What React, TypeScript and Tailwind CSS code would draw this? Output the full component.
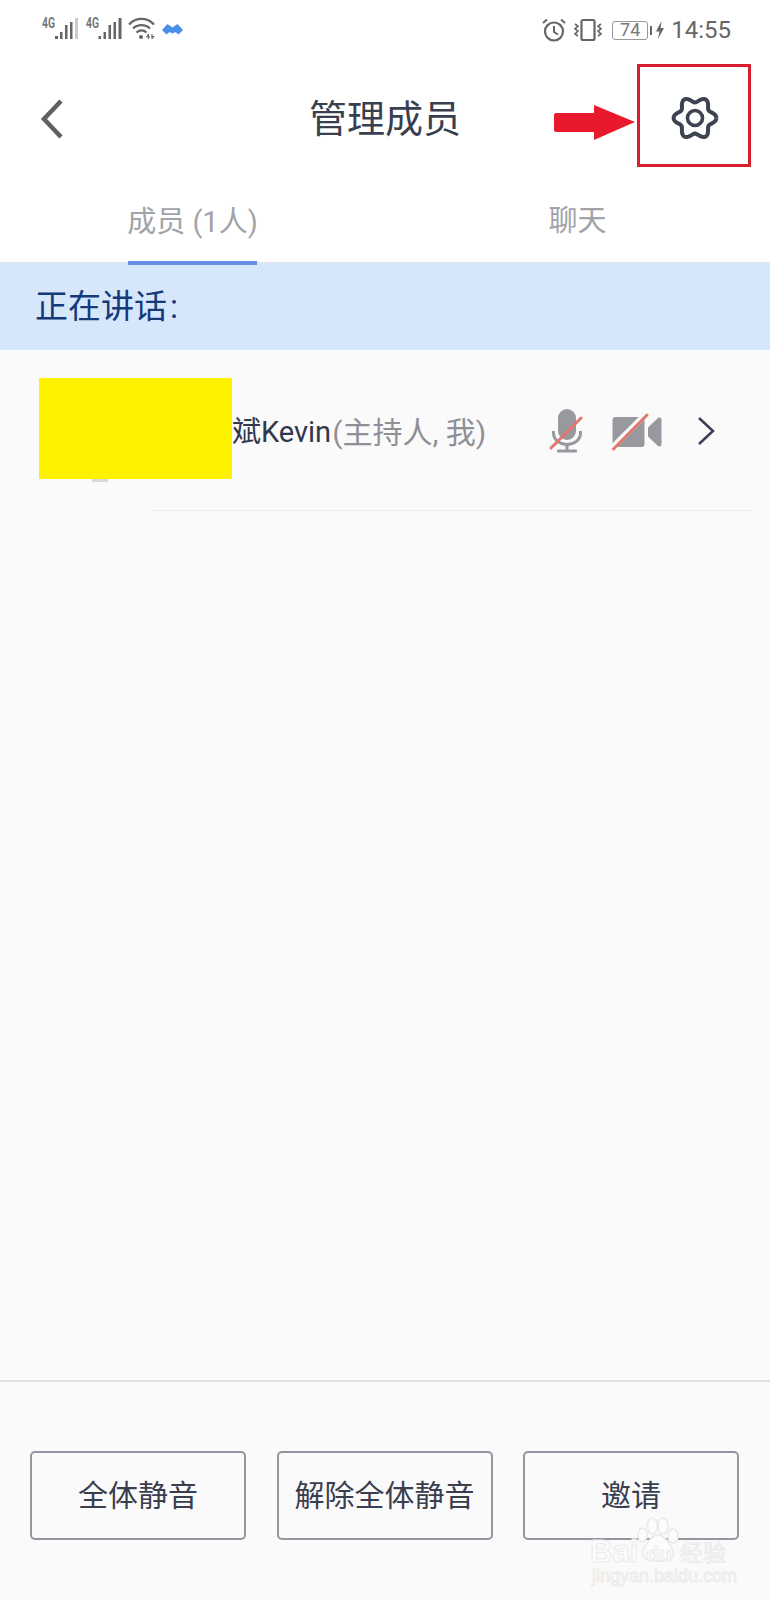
const cjk = "font-['Roboto','Noto_Sans_CJK_SC',sans-serif]";

// six-lobed outline of the settings gear
const gearPath = Array.from({ length: 121 }, (_, i) => {
  const a = (i / 120) * Math.PI * 2;
  const r = 18.5 + 2.9 * Math.cos(6 * a);
  return `${i === 0 ? "M" : "L"}${(24 + r * Math.cos(a)).toFixed(2)} ${(24 + r * Math.sin(a)).toFixed(2)}`;
}).join(" ");

function StatusLeft() {
  const weak = [
    [55, 36, 3, 3],
    [60, 32, 2.5, 7],
    [65, 25, 2.5, 14],
    [70, 22, 2.5, 17],
  ];
  const full = [
    [98.5, 36, 2.5, 3],
    [103.5, 32, 2.5, 7],
    [108.5, 25, 2.5, 14],
    [113.5, 22, 2.5, 17],
    [118.5, 18, 3, 21],
  ];
  return (
    <svg width="200" height="60" viewBox="0 0 200 60" fill="none">
      <text x="42" y="28" fontSize="14" fontWeight="700" fill="#777" textLength="13" lengthAdjust="spacingAndGlyphs" fontFamily="Roboto">4G</text>
      <text x="86" y="28" fontSize="14" fontWeight="700" fill="#777" textLength="13" lengthAdjust="spacingAndGlyphs" fontFamily="Roboto">4G</text>
      {weak.map(([x, y, w, h]) => (
        <rect key={x} x={x} y={y} width={w} height={h} fill="#666" />
      ))}
      <rect x="75" y="18" width="3" height="21" fill="#ccc" />
      {full.map(([x, y, w, h]) => (
        <rect key={x} x={x} y={y} width={w} height={h} fill="#666" />
      ))}
      <path d="M129 24.5C136 17 147 17 154 24.5" stroke="#666" strokeWidth="2.2" />
      <path d="M133 28.5C137.5 24 145.5 24 150 28.5" stroke="#666" strokeWidth="2.2" />
      <path d="M136.5 32.5C139.5 29.8 143.5 29.8 146.5 32.5" stroke="#666" strokeWidth="2.2" />
      <circle cx="141" cy="37" r="2" fill="#666" />
      <path d="M148.5 39V34L146.5 37H150M152 34V39L154 36.5H151" stroke="#666" strokeWidth="1" />
      <path d="M162 30L167.5 24L172.5 27.5L177.5 24L183 30L178.5 34.5L175.5 32L172.5 33.5L169.5 32L166.5 34.5Z" fill="#4a90e8" />
    </svg>
  );
}

function StatusRight() {
  return (
    <div className="flex items-center h-[60px] pr-[39px] text-[#666]">
      <svg width="26" height="26" viewBox="0 0 26 26" fill="none" stroke="#666" strokeWidth="2.2" className="mr-[5px]">
        <circle cx="13" cy="14.5" r="9" />
        <path d="M13 9V15L17 17.5" strokeWidth="2" />
        <path d="M2 6L6 2.5M24 6L20 2.5" strokeWidth="2" />
      </svg>
      <svg width="32" height="24" viewBox="0 0 32 24" fill="none" stroke="#666" className="mr-[8px]">
        <rect x="9.5" y="2" width="13" height="20" rx="1.5" strokeWidth="2.2" />
        <path d="M3 6L6 8L3 11L6 13L3 16L6 18M29 6L26 8L29 11L26 13L29 16L26 18" strokeWidth="1.6" />
      </svg>
      <div className="w-[36px] h-[19px] border border-[#999] rounded-[3px] flex items-center justify-center text-[18px] leading-none text-[#777] font-['Roboto',sans-serif]">
        74
      </div>
      <div className="w-[2px] h-[9px] bg-[#666] ml-[2px]" />
      <svg width="10" height="20" viewBox="0 0 10 20" fill="#666" className="ml-[3px] mr-[6px]">
        <path d="M6.5 1L1 11.5H4.5L3 19L9 8H5.5Z" />
      </svg>
      <span className="text-[24px] leading-none font-['Roboto',sans-serif]">14:55</span>
    </div>
  );
}

function Gear() {
  return (
    <svg width="48" height="48" viewBox="0 0 48 48" fill="none" stroke="#3d4350" strokeWidth="4" className="-mt-[3px]">
      <path d={gearPath} strokeLinejoin="round" />
      <circle cx="24" cy="24" r="7.5" strokeWidth="3.6" />
    </svg>
  );
}

function MicOff() {
  return (
    <svg width="36" height="46" viewBox="0 0 36 46" className="block">
      <rect x="9" y="1" width="18" height="31" rx="9" fill="#97999f" />
      <path d="M4.5 23V25C4.5 32 11 36.5 18 36.5C25 36.5 31.5 32 31.5 25V23" fill="none" stroke="#97999f" strokeWidth="3" />
      <rect x="16.5" y="36" width="3" height="7" fill="#97999f" />
      <rect x="8" y="41.5" width="20" height="3" rx="1" fill="#97999f" />
      <path d="M2 40L32 10" stroke="#e0766c" strokeWidth="3" strokeLinecap="round" />
    </svg>
  );
}

function CamOff() {
  return (
    <svg width="50" height="38" viewBox="0 0 50 38" className="block">
      <rect x="0.5" y="4" width="32" height="30" rx="3" fill="#97999f" />
      <path d="M36 14.5L46 5C47.5 4 49.5 4.5 49.5 7V31C49.5 33.5 47.5 34 46 33L36 23.5Z" fill="#97999f" />
      <path d="M-2 37L34 1" stroke="#fafafa" strokeWidth="6" />
      <path d="M1.5 36L35 2" stroke="#e0766c" strokeWidth="3" strokeLinecap="round" />
    </svg>
  );
}

function Baidu() {
  const outline = "[-webkit-text-stroke:1px_#ebebeb] text-[#fcfcfc] leading-none whitespace-nowrap";
  return (
    <div className="absolute left-[590px] top-[1515px] w-[140px] h-[70px] pointer-events-none">
      <svg width="44" height="50" viewBox="0 0 44 50" fill="#fcfcfc" stroke="#e8e8e8" strokeWidth="1.5" className="absolute left-[45px] top-0">
        <ellipse cx="17.5" cy="11" rx="5" ry="8" />
        <ellipse cx="28" cy="11" rx="5" ry="8" />
        <ellipse cx="7.5" cy="20" rx="4.5" ry="7" />
        <ellipse cx="38" cy="21" rx="5" ry="7" />
        <path d="M23 20C16 20 6 34 8 41C11 48 35 48 38 41C40 34 30 20 23 20Z" />
      </svg>
      <div className={`absolute left-0 top-[21px] text-[31px] font-bold font-['Liberation_Sans',sans-serif] ${outline}`}>Bai</div>
      <div className={`absolute left-[56px] top-[28px] text-[21px] font-bold font-['Liberation_Sans',sans-serif] ${outline}`}>du</div>
      <div className={`absolute left-[90px] top-[25px] text-[23px] font-['Noto_Sans_CJK_SC',sans-serif] ${outline}`}>经验</div>
      <div className={`absolute left-[2px] top-[52px] text-[18px] font-['Liberation_Sans',sans-serif] ${outline}`}>jingyan.baidu.com</div>
    </div>
  );
}

export default function App() {
  return (
    <div className={`relative w-[770px] h-[1600px] bg-[#fafafa] flex flex-col overflow-hidden ${cjk}`}>
      <div className="bg-white">
        <div className="flex justify-between h-[60px]">
          <StatusLeft />
          <StatusRight />
        </div>

        <div className="relative flex items-center justify-between h-[118px] pl-[37px] pr-[51px]">
          <svg width="30" height="42" viewBox="0 0 30 42" fill="none" stroke="#5f6063" strokeWidth="4.5">
            <path d="M24 3L7 21L24 39" />
          </svg>
          <div className="absolute inset-x-0 text-center text-[38px] leading-none text-[#3a3f4f]">管理成员</div>
          <Gear />
        </div>

        <div className="relative z-10 flex h-[85px] border-b border-[#e6e6e6]">
          <div className="w-1/2 flex flex-col items-center">
            <div className="flex-1 flex items-center text-[29px] leading-none text-[#a1a3a8] pt-[5px]">成员 (1人)</div>
            <div className="w-[129px] h-[4px] bg-[#6a8fe6] -mb-[3px]" />
          </div>
          <div className="w-1/2 flex items-center justify-center text-[29px] leading-none text-[#a1a3a8] pt-[3px]">聊天</div>
        </div>
      </div>

      <div className="h-[87px] bg-[#d6e7fc] flex items-center pl-[35px] text-[33px] leading-none text-[#143a7a]">
        正在讲话<span className="ml-[3px]">:</span>
      </div>

      <div className="relative flex h-[161px] pt-[28px] pl-[39px]">
        <div className="w-[193px] h-[101px] bg-[#fff200]" />
        <div className="h-[101px] flex items-center text-[29px] leading-none mt-[4px] whitespace-nowrap">
          <span className="text-[#33374d]">斌Kevin</span>
          <span className="text-[#8e9096] text-[30px] ml-[1px]">(主持人, 我)</span>
        </div>
        <div className="absolute left-[92px] top-[129px] w-[16px] h-[3px] bg-[#d9d9d6]" />
        <div className="absolute left-[150px] right-[18px] bottom-0 h-px bg-[#ededed]" />
        <div className="ml-auto pr-[54px] flex items-start pt-[30px]">
          <MicOff />
          <div className="ml-[27px] mt-[5px]">
            <CamOff />
          </div>
          <svg width="20" height="30" viewBox="0 0 20 30" fill="none" stroke="#3b3f55" strokeWidth="2.5" className="ml-[34px] mt-[8px]">
            <path d="M3 2L17 15L3 28" />
          </svg>
        </div>
      </div>

      <div className="flex-1" />

      <div className="h-[220px] border-t-2 border-[#e0e0e0] flex justify-between pl-[30px] pr-[31px] pt-[69px]">
        <button className="w-[216px] h-[89px] border-2 border-[#93959f] rounded-[5px] text-[30px] leading-none text-[#3a3e4e]">全体静音</button>
        <button className="w-[216px] h-[89px] border-2 border-[#93959f] rounded-[5px] text-[30px] leading-none text-[#3a3e4e]">解除全体静音</button>
        <button className="w-[216px] h-[89px] border-2 border-[#93959f] rounded-[5px] text-[30px] leading-none text-[#3a3e4e]">邀请</button>
      </div>

      {/* annotation drawn over the screenshot */}
      <div className="absolute left-[637px] top-[64px] w-[114px] h-[103px] border-[3px] border-[#d7202e]" />
      <svg width="84" height="40" viewBox="0 0 84 40" className="absolute left-[553px] top-[103px]">
        <path d="M1 12C1 11 2 10 3 10H41V2L82 19L41 37V29H3C2 29 1 28 1 27Z" fill="#e8192c" />
      </svg>
      <Baidu />
    </div>
  );
}
